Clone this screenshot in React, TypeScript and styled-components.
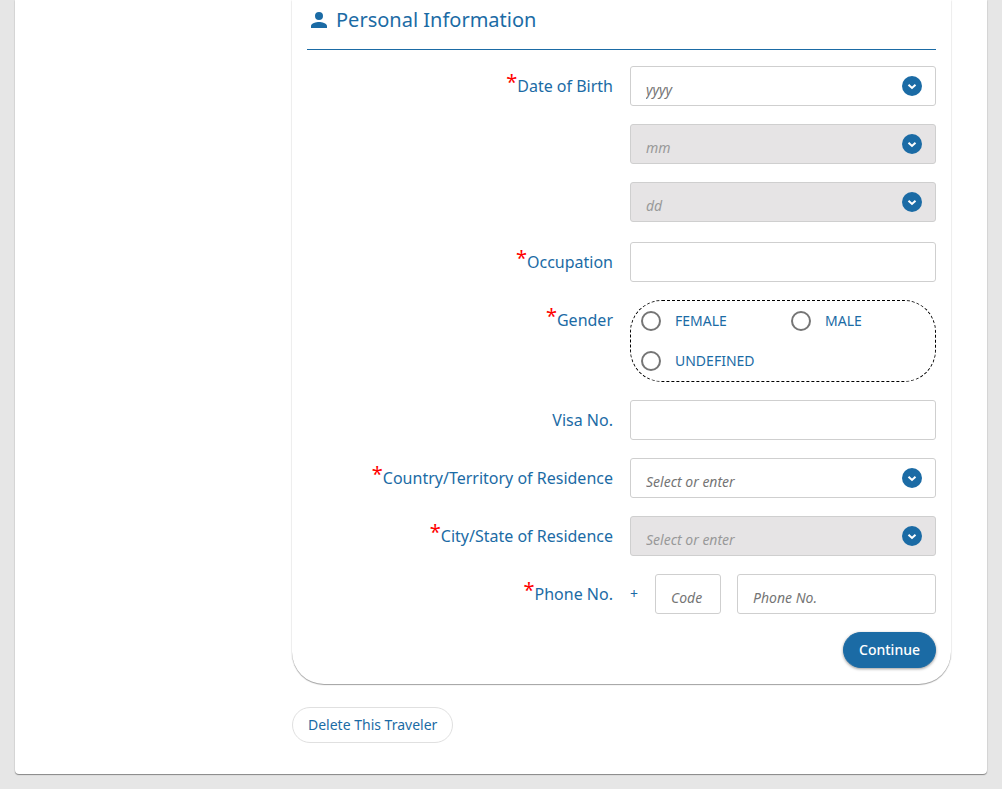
import React, { useId, useState } from "react";
import styled, { createGlobalStyle } from "styled-components";

const blue = "#1b6ba5";
const line = "#cfcfcf";

const GlobalStyle = createGlobalStyle`
  *, *::before, *::after { box-sizing: border-box; }
  body {
    margin: 0;
    background: #e6e6e6;
    color: ${blue};
    font-family: "Noto Sans", "Open Sans", sans-serif;
    font-size: 16px;
    line-height: 24px;
  }
  button, input { font: inherit; color: inherit; }
`;

const Page = styled.main`
  padding: 0 15px 15px;
`;

const Sheet = styled.div`
  display: flex;
  padding: 0 36px 31px;
  background: #fff;
  border-radius: 0 0 4px 4px;
  box-shadow: 0 1px 1px rgba(0, 0, 0, 0.4), 0 0 2px rgba(0, 0, 0, 0.12);
`;

const SideColumn = styled.div`
  flex: 0 0 241px;
`;

const MainColumn = styled.div`
  flex: 1;
  min-width: 0;
`;

const Card = styled.form`
  padding: 0 15px 16px;
  margin-bottom: 23px;
  border-radius: 0 0 32px 32px;
  box-shadow: 0 1px 1px rgba(0, 0, 0, 0.35), 0 0 2px rgba(0, 0, 0, 0.12);
`;

const Heading = styled.h2`
  display: flex;
  align-items: center;
  gap: 5px;
  height: 50px;
  margin: 0 0 16px;
  padding-bottom: 9px;
  border-bottom: 1px solid ${blue};
  font-size: 20px;
  font-weight: 400;
`;

const Rows = styled.div`
  display: grid;
  gap: 18px;
`;

const Row = styled.div<{ $spaced?: boolean }>`
  display: grid;
  grid-template-columns: minmax(0, 1fr) minmax(0, 1fr);
  column-gap: 17px;
  align-items: start;
  padding-bottom: ${(p) => (p.$spaced ? 2 : 0)}px;
`;

const Label = styled.label`
  display: flex;
  justify-content: flex-end;
  line-height: 40px;
  white-space: nowrap;
`;

const Asterisk = styled.span`
  color: #f00;
  font-size: 20px;
  line-height: 32px;
`;

const Stack = styled.div`
  display: grid;
  gap: 18px;
`;

const TextInput = styled.input`
  width: 100%;
  min-width: 0;
  height: 40px;
  padding: 6px 15px 0;
  border: 1px solid ${line};
  border-radius: 3px;
  background: #fff;
  font-size: 14px;
  outline-color: ${blue};

  &::placeholder {
    color: #757575;
    font-style: italic;
    opacity: 1;
  }
  &:disabled {
    background: #e6e4e5;
  }
  &:disabled::placeholder {
    color: #999;
  }
`;

const ComboBox = styled.div`
  display: grid;
  align-items: center;

  & > * { grid-area: 1 / 1; }
`;

const DropButton = styled.button`
  justify-self: end;
  display: flex;
  width: 20px;
  height: 20px;
  margin-right: 14px;
  padding: 0;
  border: 0;
  border-radius: 50%;
  background: ${blue};
`;

const Choices = styled.div`
  display: grid;
  grid-template-columns: minmax(0, 1fr) minmax(0, 1fr);
  column-gap: 6px;
  padding: 0 0 0 10px;
  border: 1px dashed #000;
  border-radius: 32px;
`;

const Choice = styled.label`
  display: flex;
  align-items: center;
  gap: 14px;
  height: 40px;
  font-size: 14px;
`;

const Radio = styled.input`
  appearance: none;
  width: 20px;
  height: 20px;
  margin: 0;
  border: 2px solid #757575;
  border-radius: 50%;

  &:checked {
    border-color: ${blue};
    background: radial-gradient(${blue} 0 5px, transparent 6px);
  }
`;

const PhoneFields = styled.div`
  display: grid;
  grid-template-columns: 9px 66px minmax(0, 1fr);
  column-gap: 16px;
  align-items: center;
  font-size: 14px;
`;

const Actions = styled.div`
  display: flex;
  justify-content: flex-end;
`;

const PillButton = styled.button<{ $primary?: boolean }>`
  height: 36px;
  padding: 0 15px;
  border: 1px solid ${(p) => (p.$primary ? blue : "#e0e0e0")};
  border-radius: 18px;
  background: ${(p) => (p.$primary ? blue : "#fff")};
  color: ${(p) => (p.$primary ? "#fff" : blue)};
  box-shadow: ${(p) => (p.$primary ? "0 1px 3px rgba(0, 0, 0, 0.4)" : "none")};
  font-size: 14px;
  font-weight: ${(p) => (p.$primary ? 500 : 400)};
  white-space: nowrap;
`;

function PersonIcon() {
  return (
    <svg width="24" height="24" viewBox="0 0 24 24" fill={blue} aria-hidden="true">
      <path d="M12 12a4 4 0 1 0 0-8 4 4 0 0 0 0 8zm0 2c-2.670 0-8 1.340-8 4v2h16v-2c0-2.660-5.330-4-8-4z" />
    </svg>
  );
}

function ChevronIcon() {
  return (
    <svg width="20" height="20" viewBox="0 0 20 20" fill="none" stroke="#fff" strokeWidth="2" aria-hidden="true">
      <path d="M6.500 8.700 10 12l3.500-3.300" />
    </svg>
  );
}

type ComboProps = { id?: string; name: string; placeholder: string; disabled?: boolean };

function Combo({ id, name, placeholder, disabled }: ComboProps) {
  return (
    <ComboBox>
      <TextInput id={id} aria-label={name} role="combobox" aria-expanded={false} placeholder={placeholder} disabled={disabled} />
      <DropButton type="button" aria-label={`Open ${name}`} disabled={disabled}>
        <ChevronIcon />
      </DropButton>
    </ComboBox>
  );
}

type FieldProps = {
  label: string;
  required?: boolean;
  spaced?: boolean;
  children: (id: string) => React.ReactNode;
};

function Field({ label, required, spaced, children }: FieldProps) {
  const id = useId();
  return (
    <Row $spaced={spaced}>
      <Label htmlFor={id} id={`${id}-label`}>
        {required && <Asterisk>*</Asterisk>}
        {label}
      </Label>
      {children(id)}
    </Row>
  );
}

export default function App() {
  const [gender, setGender] = useState("");

  return (
    <>
      <GlobalStyle />
      <Page>
        <Sheet>
          <SideColumn />
          <MainColumn>
            <Card onSubmit={(e) => e.preventDefault()}>
              <Heading>
                <PersonIcon />
                Personal Information
              </Heading>
              <Rows>
                <Field label="Date of Birth" required spaced>
                  {(id) => (
                    <Stack>
                      <Combo id={id} name="Year of birth" placeholder="yyyy" />
                      <Combo name="Month of birth" placeholder="mm" disabled />
                      <Combo name="Day of birth" placeholder="dd" disabled />
                    </Stack>
                  )}
                </Field>
                <Field label="Occupation" required>
                  {(id) => <TextInput id={id} />}
                </Field>
                <Field label="Gender" required>
                  {(id) => (
                    <Choices role="radiogroup" aria-labelledby={`${id}-label`}>
                      {["FEMALE", "MALE", "UNDEFINED"].map((value, i) => (
                        <Choice key={value}>
                          <Radio
                            id={i === 0 ? id : undefined}
                            type="radio"
                            name="gender"
                            value={value}
                            checked={gender === value}
                            onChange={() => setGender(value)}
                          />
                          {value}
                        </Choice>
                      ))}
                    </Choices>
                  )}
                </Field>
                <Field label="Visa No.">{(id) => <TextInput id={id} />}</Field>
                <Field label="Country/Territory of Residence" required>
                  {(id) => <Combo id={id} name="Country or territory" placeholder="Select or enter" />}
                </Field>
                <Field label="City/State of Residence" required>
                  {(id) => <Combo id={id} name="City or state" placeholder="Select or enter" disabled />}
                </Field>
                <Field label="Phone No." required>
                  {(id) => (
                    <PhoneFields>
                      <span>+</span>
                      <TextInput aria-label="Country code" placeholder="Code" />
                      <TextInput id={id} type="tel" placeholder="Phone No." />
                    </PhoneFields>
                  )}
                </Field>
                <Actions>
                  <PillButton $primary type="submit">Continue</PillButton>
                </Actions>
              </Rows>
            </Card>
            <PillButton type="button">Delete This Traveler</PillButton>
          </MainColumn>
        </Sheet>
      </Page>
    </>
  );
}
